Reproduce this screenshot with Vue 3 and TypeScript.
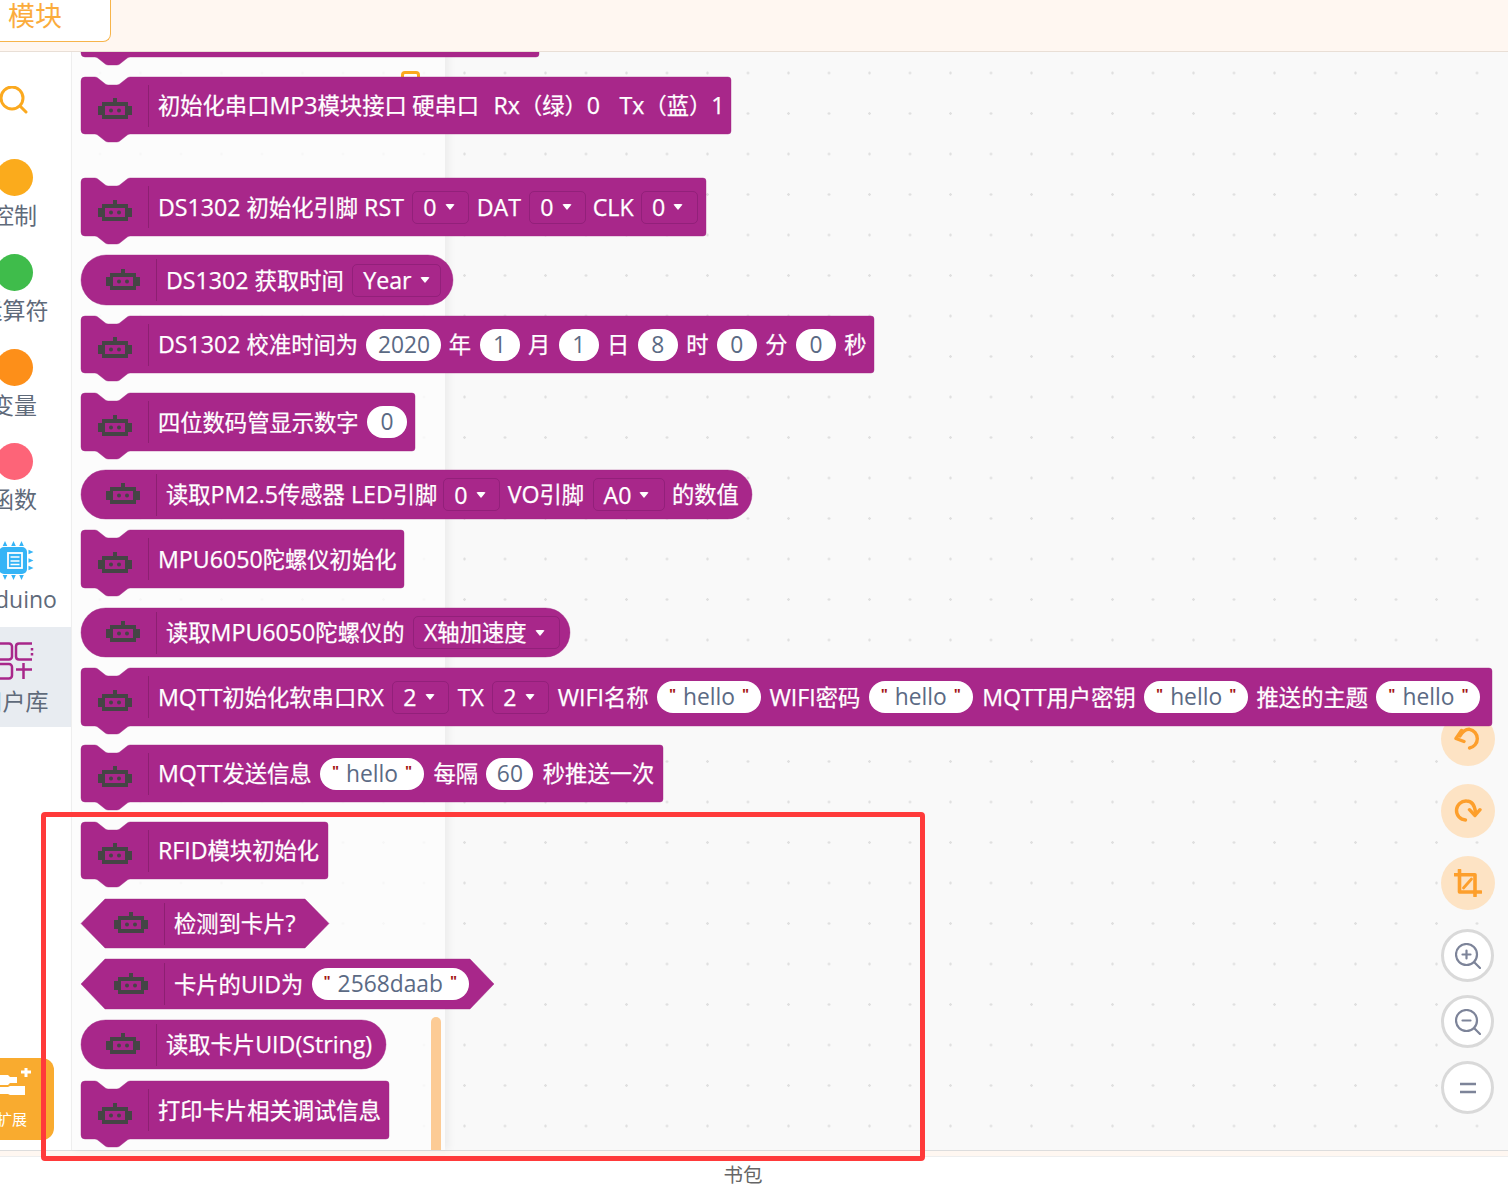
<script setup lang="ts">
type Part = { k: 't' | 'd' | 'n' | 's'; v: string; w?: number; ml?: number }
type Shape = 'stack' | 'pill' | 'hex'
interface Block { top: number; w: number; h: number; shape: Shape; parts: Part[] }

const t = (v: string, ml = 0): Part => ({ k: 't', v, ml })
const d = (v: string, w = 57, ml = 0): Part => ({ k: 'd', v, w, ml })
const n = (v: string, w = 40): Part => ({ k: 'n', v, w, ml: 0 })
const s = (v: string, w = 104): Part => ({ k: 's', v, w, ml: 0 })

const blocks: Block[] = [
  { top: 20, w: 458, h: 37, shape: 'stack', parts: [] },
  { top: 77, w: 650, h: 57, shape: 'stack', parts: [t('初始化串口MP3模块接口'), t('硬串口', -3), t(' Rx（绿）0'), t('  Tx（蓝）1', -1)] },
  { top: 178, w: 625, h: 58, shape: 'stack', parts: [t('DS1302 初始化引脚 RST'), d('0'), t('DAT', -1), d('0'), t('CLK', -2), d('0', 57, -1)] },
  { top: 255, w: 372, h: 50, shape: 'pill', parts: [t('DS1302 获取时间'), d('Year', 89)] },
  { top: 316, w: 793, h: 57, shape: 'stack', parts: [t('DS1302 校准时间为'), n('2020', 75), t('年', -1), n('1'), t('月'), n('1'), t('日'), n('8'), t('时'), n('0'), t('分'), n('0'), t('秒')] },
  { top: 393, w: 334, h: 58, shape: 'stack', parts: [t('四位数码管显示数字'), n('0')] },
  { top: 470, w: 671, h: 49, shape: 'pill', parts: [t('读取PM2.5传感器 LED引脚'), d('0', 57, -2.5), t('VO引脚', -1), d('A0', 72), t('的数值', -1)] },
  { top: 530, w: 323, h: 58, shape: 'stack', parts: [t('MPU6050陀螺仪初始化')] },
  { top: 608, w: 489, h: 49, shape: 'pill', parts: [t('读取MPU6050陀螺仪的'), d('X轴加速度', 147)] },
  { top: 668, w: 1411, h: 58, shape: 'stack', parts: [t('MQTT初始化软串口RX'), d('2'), t('TX'), d('2'), t('WIFI名称'), s('hello'), t('WIFI密码'), s('hello'), t('MQTT用户密钥', 1), s('hello'), t('推送的主题'), s('hello')] },
  { top: 745, w: 582, h: 57, shape: 'stack', parts: [t('MQTT发送信息'), s('hello'), t('每隔', 1), n('60', 47), t('秒推送一次', 1)] },
  { top: 822, w: 247, h: 57, shape: 'stack', parts: [t('RFID模块初始化')] },
  { top: 899, w: 248, h: 49, shape: 'hex', parts: [t('检测到卡片?')] },
  { top: 959, w: 413, h: 50, shape: 'hex', parts: [t('卡片的UID为'), s('2568daab', 157)] },
  { top: 1020, w: 305, h: 49, shape: 'pill', parts: [t('读取卡片UID(String)')] },
  { top: 1081, w: 308, h: 58, shape: 'stack', parts: [t('打印卡片相关调试信息')] },
]

function shapePath(b: Block): string {
  const { w, h } = b
  if (b.shape === 'pill') {
    const r = h / 2
    return `M${r},0 H${w - r} A${r},${r} 0 0 1 ${w - r},${h} H${r} A${r},${r} 0 0 1 ${r},0 Z`
  }
  if (b.shape === 'hex') {
    return `M0,${h / 2} L24,0 H${w - 24} L${w},${h / 2} L${w - 24},${h} H24 Z`
  }
  return `M0,4 Q0,0 4,0 H14 Q16,0 18,2 L23,6 Q25,8 27,8 H36 Q38,8 40,6 L45,2 Q47,0 49,0 H${w - 3} Q${w},0 ${w},3 V${h - 3} Q${w},${h} ${w - 3},${h} H49 Q47,${h} 45,${h + 2} L40,${h + 6} Q38,${h + 8} 36,${h + 8} H27 Q25,${h + 8} 23,${h + 6} L18,${h + 2} Q16,${h} 14,${h} H4 Q0,${h} 0,${h - 4} Z`
}

/* Latin runs sit slightly larger than the CJK runs in the reference */
function segs(text: string): { v: string; cjk: boolean }[] {
  return text
    .split(/([\u4e00-\u9fff\uff08\uff09]+)/)
    .filter((x) => x.length > 0)
    .map((x) => ({ v: x, cjk: /[\u4e00-\u9fff\uff08\uff09]/.test(x) }))
}

const cats = [
  { label: '控制', color: '#fbab1c' },
  { label: '运算符', color: '#3fbc4b' },
  { label: '变量', color: '#fd8f19' },
  { label: '函数', color: '#fd6478' },
]
</script>

<template>
  <div class="app">
    <header class="top">
      <div class="tab">模块</div>
    </header>

    <main class="main">
      <aside class="side">
        <div class="search">
          <svg width="28" height="28" viewBox="0 0 28 28" fill="none" stroke="#fba91f" stroke-width="3" stroke-linecap="round">
            <circle cx="12" cy="12" r="11" />
            <path d="M20.5 20.5 L26 26" />
          </svg>
        </div>
        <div v-for="c in cats" :key="c.label" class="cat">
          <span class="dot" :style="{ background: c.color }"></span>
          <span class="lab">{{ c.label }}</span>
        </div>
        <div class="cat cat-ard">
          <svg class="chip" width="34" height="40" viewBox="0 0 34 40">
            <g fill="#35b4f6">
              <path d="M5 0 l2.300 5 h-4.600 z M13.500 0 l2.300 5 h-4.600 z M21.500 0 l2.300 5 h-4.600 z M5 39 l2.300 -5 h-4.600 z M13.500 39 l2.300 -5 h-4.600 z M21.500 39 l2.300 -5 h-4.600 z M33.500 11 l-5 2.300 v-4.600 z M33.500 19.500 l-5 2.300 v-4.600 z M33.500 27 l-5 2.300 v-4.600 z" />
              <rect x="-1" y="6" width="28" height="27" rx="5" />
            </g>
            <rect x="8" y="12" width="14" height="15" fill="none" stroke="#fff" stroke-width="1.800" />
            <path d="M10.500 16 h9 M10.500 20 h9 M10.500 23.500 h9" stroke="#fff" stroke-width="1.300" />
          </svg>
          <span class="lab">Arduino</span>
        </div>
        <div class="cat cat-user">
          <svg class="lib" width="34" height="38" viewBox="0 0 34 38" fill="none" stroke="#a8278a" stroke-width="2.500">
            <rect x="-8" y="1.500" width="20" height="16" rx="3" />
            <path d="M32 1.500 H19 Q16 1.500 16 4.500 V14.500 Q16 17.500 19 17.500 H32 M32 6 v2.500 M32 11 v2.500" />
            <rect x="-8" y="22" width="20" height="14.500" rx="3" />
            <path d="M23.500 21 V37 M16 27.500 H32" />
          </svg>
          <span class="lab">用户库</span>
        </div>
        <div class="expand">
          <svg width="34" height="32" viewBox="0 0 34 32" fill="#fff">
            <path d="M0 7 h8 l2 2 h7 v6 h-7 l-2 2 h-8 z M0 19 h8 l2 -1 h15 v9 h-15 l-2 -1 h-8 z" />
            <path d="M24.500 0 h3 v2.500 h3.500 v3 h-3.500 v3.500 h-3 v-3.500 h-3.500 v-3 h3.500 z" />
          </svg>
          <span>扩展</span>
        </div>
      </aside>

      <section class="stage">
        <div class="flyout"></div>
        <div class="scroll"></div>
        <div class="ring"></div>
        <div class="tools">
          <button class="tool soft">
            <svg width="28" height="28" viewBox="0 0 28 28" fill="none" stroke="#fd9f2c" stroke-width="3.400" stroke-linecap="round" stroke-linejoin="round">
              <path d="M15.500 23 A9.500 9.500 0 0 0 15.500 4.300 Q10 4 6 11" />
              <path d="M7.500 5.500 L2 13.500 L10 16.500" />
            </svg>
          </button>
          <button class="tool soft">
            <svg width="28" height="28" viewBox="0 0 28 28" fill="none" stroke="#fd9f2c" stroke-width="3.400" stroke-linecap="round" stroke-linejoin="round">
              <path d="M11.500 23 A9.500 9.500 0 0 1 12.500 4 Q20 4 21.500 15" />
              <path d="M15.500 12.700 L21 18.500 L26 12.700" />
            </svg>
          </button>
          <button class="tool soft">
            <svg width="28" height="28" viewBox="0 0 28 28" fill="none" stroke="#fd9f2c" stroke-width="3.600" stroke-linecap="round" stroke-linejoin="round">
              <path d="M5.500 1 V23 H27" />
              <path d="M1 5.700 H21 V27" />
              <path d="M9.500 19 L17.500 10" stroke-width="2.800" />
            </svg>
          </button>
          <button class="tool line first">
            <svg width="26" height="26" viewBox="0 0 26 26" fill="none" stroke="#7d8499" stroke-width="2.200" stroke-linecap="round">
              <circle cx="11.500" cy="11.500" r="10.500" />
              <path d="M19 19 L25 25 M7.500 11.500 H15.500 M11.500 7.500 V15.500" />
            </svg>
          </button>
          <button class="tool line">
            <svg width="26" height="26" viewBox="0 0 26 26" fill="none" stroke="#7d8499" stroke-width="2.200" stroke-linecap="round">
              <circle cx="11.500" cy="11.500" r="10.500" />
              <path d="M19 19 L25 25 M7.500 11.500 H15.500" />
            </svg>
          </button>
          <button class="tool line">
            <svg width="16" height="14" viewBox="0 0 16 14" fill="none" stroke="#7d8499" stroke-width="2.600">
              <path d="M0 3 H16 M0 11 H16" />
            </svg>
          </button>
        </div>
      </section>
    </main>

    <div class="canvas">
      <div
        v-for="(b, i) in blocks"
        :key="i"
        class="block"
        :class="b.shape"
        :style="{ top: b.top + 'px', width: b.w + 'px', height: b.h + 'px' }"
      >
        <svg class="bg" :width="b.w" :height="b.h + 9">
          <path :d="shapePath(b)" fill="#a8278a" stroke="#9c2380" stroke-width="0.400" />
        </svg>
        <div v-if="b.parts.length" class="row">
          <svg class="bot" width="34" height="21" viewBox="0 0 34 21" shape-rendering="crispEdges">
            <g fill="#454545">
              <rect x="15" y="0" width="4" height="4" />
              <rect x="4" y="4" width="26" height="17" />
              <rect x="0" y="8" width="4" height="9" />
              <rect x="30" y="8" width="4" height="9" />
            </g>
            <rect x="7" y="8" width="20" height="9" fill="#a8278a" />
            <circle cx="13" cy="12.500" r="2" fill="#454545" shape-rendering="auto" />
            <circle cx="21" cy="12.500" r="2" fill="#454545" shape-rendering="auto" />
          </svg>
          <i class="sep"></i>
          <template v-for="(p, j) in b.parts" :key="j">
            <span v-if="p.k === 't'" class="txt" :style="{ marginLeft: p.ml + 'px' }"><span v-for="(g, m) in segs(p.v)" :key="m" :class="{ cjk: g.cjk }">{{ g.v }}</span></span>
            <span v-else-if="p.k === 'd'" class="drop" :style="{ width: p.w + 'px', marginLeft: p.ml + 'px' }"><span><span v-for="(g, m) in segs(p.v)" :key="m" :class="{ cjk: g.cjk }">{{ g.v }}</span></span><em class="caret"></em></span>
            <span v-else-if="p.k === 'n'" class="num" :style="{ width: p.w + 'px' }">{{ p.v }}</span>
            <span v-else class="num str" :style="{ width: p.w + 'px' }"><b>"</b>{{ p.v }}<b>"</b></span>
          </template>
        </div>
      </div>
    </div>

    <div class="mark"></div>

    <footer class="foot">
      <div class="strip"></div>
      <div class="bag">书包</div>
    </footer>
  </div>
</template>

<style>
html, body { margin: 0; overflow: hidden; background: #fff; }
</style>

<style scoped>
.app {
  position: relative;
  width: 1508px;
  height: 1191px;
  display: flex;
  flex-direction: column;
  overflow: hidden;
  font-family: "Open Sans", "Noto Sans CJK SC", sans-serif;
}
.top {
  position: relative;
  z-index: 4;
  height: 51px;
  flex: none;
  background: #fff7f1;
  border-bottom: 1px solid #e9dfd6;
}
.tab {
  width: 112px;
  height: 42px;
  margin-left: -1px;
  padding-left: 8px;
  box-sizing: border-box;
  background: #fff;
  border: 1px solid #f7b44a;
  border-top: 0;
  border-bottom-right-radius: 8px;
  color: #fbac3c;
  font-size: 27px;
  line-height: 32px;
}
.main { flex: 1; display: flex; min-height: 0; }
.side {
  position: relative;
  width: 71px;
  flex: none;
  background: #fff;
  border-right: 1px solid #efefef;
  overflow: hidden;
}
.search { height: 107px; padding-top: 34px; box-sizing: border-box; }
.search svg { display: block; }
.cat { height: 94.750px; display: flex; flex-direction: column; align-items: flex-start; box-sizing: border-box; }
.dot { display: block; flex: none; width: 37px; height: 37px; border-radius: 50%; margin-left: -4px; }
.lab {
  width: 28px;
  display: flex;
  justify-content: center;
  white-space: nowrap;
  font-size: 23px;
  line-height: 30px;
  margin-top: 4px;
  color: #5f6a7a;
}
.cat-ard { height: 89px; padding-top: 3px; }
.chip { display: block; flex: none; }
.cat-ard .lab { margin-top: 3px; }
.cat-user { background: #e8ecf1; height: 100px; padding-top: 15px; }
.lib { display: block; flex: none; }
.cat-user .lab { margin-top: 6px; }
.expand {
  position: absolute;
  left: -20px;
  top: 1006px;
  width: 74px;
  height: 82px;
  border-radius: 12px;
  background: #f9ab2f;
  color: #fff;
  box-sizing: border-box;
  padding: 10px 0 0 20px;
  font-size: 15px;
  line-height: 22px;
}
.expand svg { display: block; margin-bottom: 8px; }
.expand span { display: block; margin-left: -3px; white-space: nowrap; }
.stage {
  position: relative;
  flex: 1;
  background-color: #f9f9f9;
  background-image: radial-gradient(circle, #e0e0e0 1px, transparent 1.500px);
  background-size: 40.500px 40.500px;
  background-position: 7.750px 0.750px;
}
.flyout {
  position: absolute;
  left: 0;
  top: 0;
  bottom: 0;
  width: 373px;
  background: rgba(253, 253, 253, 0.8);
  box-shadow: 4px 0 8px rgba(0, 0, 0, 0.05);
}
.scroll {
  position: absolute;
  left: 359px;
  top: 965px;
  bottom: 0;
  width: 10px;
  border-radius: 5px 5px 0 0;
  background: #fccb95;
}
.ring {
  position: absolute;
  left: 329px;
  top: 19px;
  width: 19px;
  height: 20px;
  box-sizing: border-box;
  border: 3px solid #fba91f;
  border-radius: 4px;
  background: #fff;
}
.tools {
  position: absolute;
  right: 14px;
  top: 660px;
  display: flex;
  flex-direction: column;
  gap: 18px;
  align-items: center;
  width: 53px;
}
.tool {
  flex: none;
  display: flex;
  align-items: center;
  justify-content: center;
  padding: 0;
  border-radius: 50%;
  box-sizing: border-box;
}
.soft { width: 54px; height: 54px; background: #fde3c4; border: 0; }
.line { width: 53px; height: 53px; background: #fff; border: 3px solid #d9d9d9; margin-bottom: -5px; }
.first { margin-top: 1px; }
.canvas { position: absolute; left: 0; top: 0; width: 0; height: 0; z-index: 2; }
.block { position: absolute; left: 81px; }
.bg { position: absolute; left: 0; top: 0; overflow: visible; }
.row {
  position: relative;
  height: 100%;
  display: flex;
  align-items: center;
  gap: 8.400px;
  white-space: pre;
  color: #fff;
  font-size: 23.200px;
  line-height: 32px;
  -webkit-text-stroke: 0.250px #fff;
}
.cjk { font-size: 22.300px; }
.stack .row { padding-left: 17px; }
.pill .row { padding-left: 25px; }
.hex .row { padding-left: 33px; }
.bot { flex: none; margin-right: 7.600px; position: relative; top: -1px; }
.stack .bot { top: 3px; }
.sep { flex: none; width: 1px; height: 42px; margin-right: 0.600px; background: #8d1f72; }
.txt { flex: none; }
.drop {
  flex: none;
  height: 33px;
  box-sizing: border-box;
  padding-left: 10px;
  display: flex;
  align-items: center;
  justify-content: flex-start;
  gap: 8px;
  border: 1px solid #92207a;
  border-radius: 5px;
  background: #a8278a;
}
.caret {
  width: 0;
  height: 0;
  border-left: 5.500px solid transparent;
  border-right: 5.500px solid transparent;
  border-top: 6px solid #fff;
  border-radius: 2px;
}
.num {
  flex: none;
  height: 32px;
  border-radius: 16px;
  background: #fff;
  color: #5b6a84;
  font-size: 22.800px;
  -webkit-text-stroke: 0;
  display: flex;
  align-items: center;
  justify-content: center;
}
.str { gap: 7px; }
.str b { color: #a31515; font-weight: 700; font-size: 15px; position: relative; top: -4px; }
.mark {
  position: absolute;
  z-index: 5;
  left: 41px;
  top: 812px;
  width: 884px;
  height: 349px;
  box-sizing: border-box;
  border: 5px solid #ff3a3a;
  border-radius: 4px;
}
.foot { height: 41px; flex: none; background: #fff; }
.strip { height: 7px; background: #fff7f1; border-top: 1px solid #ddd; border-bottom: 1px solid #eee; box-sizing: border-box; }
.bag { text-align: center; margin-left: -22px; font-size: 19.500px; line-height: 24px; margin-top: 6px; color: #666; }
</style>
